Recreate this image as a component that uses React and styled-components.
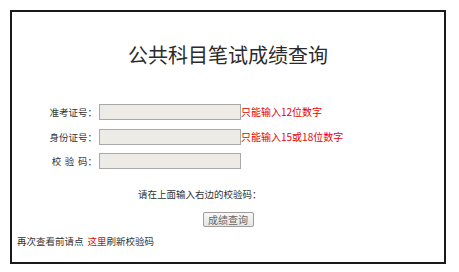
import React from 'react'
import styled, { createGlobalStyle } from 'styled-components'

const GlobalStyle = createGlobalStyle`
  html, body {
    margin: 0;
    padding: 0;
    background: #fff;
  }
  body {
    font-family: "Noto Sans CJK SC", "Liberation Sans", sans-serif;
    color: #333;
  }
`

const Page = styled.div`
  padding: 10px;
`

const Box = styled.div`
  box-sizing: border-box;
  width: 436px;
  height: 254px;
  border: 2px solid #1a1a1a;
  padding: 31px 5px 0;
  display: flex;
  flex-direction: column;
`

const Title = styled.h1`
  margin: 0;
  font-size: 20px;
  line-height: 24px;
  font-weight: normal;
  text-align: center;
  color: #2b2b2b;
`

const Form = styled.div`
  display: grid;
  grid-template-columns: 80px 142px auto;
  column-gap: 2px;
  row-gap: 8.5px;
  margin-top: 37px;
  align-items: center;
`

const Label = styled.label`
  font-size: 9.5px;
  line-height: 16px;
  text-align: right;
  color: #333;
  white-space: pre;
  word-spacing: ${(p) => (p.spaced ? '1.5px' : '0')};
`

const Input = styled.input`
  box-sizing: border-box;
  width: 142px;
  height: 16px;
  margin: 0;
  padding: 0 2px;
  border: 1px solid #a9a9a9;
  background: #ecebe6;
  outline: none;
`

const Note = styled.span`
  font-size: 10px;
  line-height: 16px;
  color: #e60000;
  white-space: nowrap;
  margin-left: -2px;
`

const Hint = styled.div`
  margin-top: 19px;
  padding-left: 121px;
  font-size: 9.5px;
  line-height: 12px;
  color: #333;
`

const ButtonRow = styled.div`
  display: flex;
  justify-content: center;
  margin-top: 12px;
`

const Button = styled.button`
  box-sizing: border-box;
  width: 51px;
  height: 15px;
  padding: 0;
  font-family: inherit;
  font-size: 10px;
  line-height: 13px;
  color: #666;
  background: linear-gradient(#f8f8f6, #e6e5e0);
  border: 1px solid #9d9d9d;
  border-radius: 2px;
`

const Footer = styled.div`
  margin-top: 8px;
  font-size: 9.5px;
  line-height: 12px;
  color: #333;
`

const Red = styled.a`
  color: #e60000;
  text-decoration: none;
  margin-left: 4px;
`

const fields = [
  { label: '准考证号：', note: '只能输入12位数字' },
  { label: '身份证号：', note: '只能输入15或18位数字' },
  { label: '校 验 码：', note: '', spaced: true },
]

export default function App() {
  return (
    <Page>
      <GlobalStyle />
      <Box>
        <Title>公共科目笔试成绩查询</Title>
        <Form>
          {fields.map((f) => (
            <React.Fragment key={f.label}>
              <Label spaced={f.spaced}>{f.label}</Label>
              <Input type="text" />
              <Note>{f.note}</Note>
            </React.Fragment>
          ))}
        </Form>
        <Hint>请在上面输入右边的校验码：</Hint>
        <ButtonRow>
          <Button>成绩查询</Button>
        </ButtonRow>
        <Footer>
          再次查看前请点<Red href="#">这里</Red>刷新校验码
        </Footer>
      </Box>
    </Page>
  )
}
